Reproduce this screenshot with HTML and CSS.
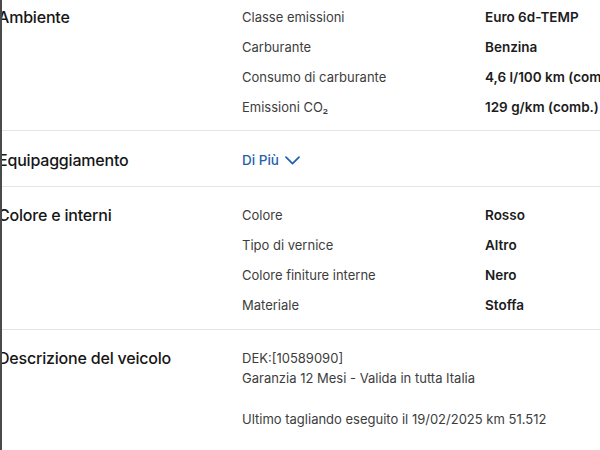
FILE: index.html
```html
<!DOCTYPE html>
<html lang="it">
<head>
<meta charset="utf-8">
<link rel="stylesheet" href="styles.css">
</head>
<body>
<div class="frame">
  <div class="page">
    <section class="section first">
      <h2 class="title">Ambiente</h2>
      <dl class="details">
        <dt>Classe emissioni</dt><dd>Euro 6d-TEMP</dd>
        <dt>Carburante</dt><dd>Benzina</dd>
        <dt>Consumo di carburante</dt><dd>4,6 l/100 km (comb.)</dd>
        <dt>Emissioni CO₂</dt><dd>129 g/km (comb.)</dd>
      </dl>
    </section>
    <section class="section equip">
      <h2 class="title">Equipaggiamento</h2>
      <div class="details">
        <a class="more">Di Più
          <svg class="chev" width="15" height="9" viewBox="0 0 15 9"><path d="M1 1.2 L7.5 7.6 L14 1.2" fill="none" stroke="currentColor" stroke-width="1.7" stroke-linecap="round" stroke-linejoin="round"/></svg>
        </a>
      </div>
    </section>
    <section class="section">
      <h2 class="title">Colore e interni</h2>
      <dl class="details">
        <dt>Colore</dt><dd>Rosso</dd>
        <dt>Tipo di vernice</dt><dd>Altro</dd>
        <dt>Colore finiture interne</dt><dd>Nero</dd>
        <dt>Materiale</dt><dd>Stoffa</dd>
      </dl>
    </section>
    <section class="section desc">
      <h2 class="title">Descrizione del veicolo</h2>
      <div class="details text">
        <p>DEK:[10589090]<br>Garanzia 12 Mesi - Valida in tutta Italia</p>
        <p>Ultimo tagliando eseguito il 19/02/2025 km 51.512</p>
      </div>
    </section>
  </div>
</div>
</body>
</html>
```

FILE: styles.css
```css
html, body {
  margin: 0;
  padding: 0;
  background: #fff;
}
body {
  font-family: Inter, "Noto Sans", "Liberation Sans", sans-serif;
  color: #1c1c1c;
  width: 600px;
  height: 450px;
  overflow: hidden;
}
.frame {
  border-left: 2px solid #4a4a4a;
  height: 450px;
  overflow: hidden;
}
.page {
  margin-left: -4px;
}
.section {
  display: flex;
  border-bottom: 1px solid #e4e4e4;
  padding: 13px 0 9px;
}
.section.first {
  padding-top: 2px;
  padding-bottom: 8px;
}
.section.equip {
  padding: 14px 0 11px;
}
.section.desc {
  border-bottom: none;
  padding-top: 18px;
}
.title {
  margin: 0;
  width: 244px;
  flex: none;
  font-size: 16px;
  font-weight: 500;
  line-height: 30px;
  color: #161616;
  letter-spacing: -0.2px;
}
.desc .title {
  line-height: 20px;
}
.details {
  flex: 1;
  margin: 0;
  display: grid;
  grid-template-columns: 243px 1fr;
  font-size: 13px;
  line-height: 30px;
  white-space: nowrap;
}
.details dt {
  color: #3d3d3d;
}
.details dd {
  margin: 0;
  font-size: 13.5px;
  font-weight: 600;
  color: #1c1c1c;
}
.more {
  display: flex;
  align-items: center;
  gap: 6px;
  color: #1f5fae;
  font-weight: 500;
  font-size: 13.5px;
  line-height: 30px;
}
.chev {
  display: block;
  margin-top: 1px;
}
.details.text {
  display: block;
  line-height: 20px;
  color: #3d3d3d;
}
.details.text p {
  margin: 0 0 21px;
}
```
